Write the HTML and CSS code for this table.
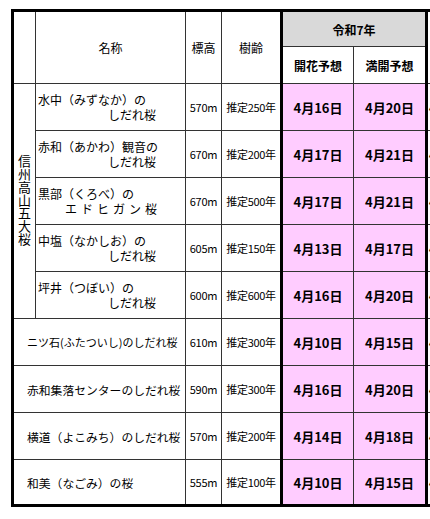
FILE: index.html
```html
<!DOCTYPE html>
<html lang="ja">
<head>
<meta charset="utf-8">
<title>しだれ桜 開花予想</title>
<link rel="stylesheet" href="styles.css">
</head>
<body>
<div class="viewport">
<table class="sakura">
<colgroup>
<col class="c-group"><col class="c-name"><col class="c-alt"><col class="c-age"><col class="c-bloom"><col class="c-full"><col class="c-next">
</colgroup>
<thead>
<tr class="h1">
<th rowspan="2" class="grp-head"></th>
<th rowspan="2" class="plain">名称</th>
<th rowspan="2" class="plain">標高</th>
<th rowspan="2" class="plain">樹齢</th>
<th colspan="2" class="year">令和7年</th>
<th rowspan="2" class="next"></th>
</tr>
<tr class="h2">
<th class="sub bloom">開花予想</th>
<th class="sub full">満開予想</th>
</tr>
</thead>
<tbody>
<tr class="row">
<td rowspan="5" class="group"><span class="vert">信州高山五大桜</span></td>
<td class="name"><span class="l1">水中（みずなか）の</span><span class="l2">しだれ桜</span></td>
<td class="alt">570m</td>
<td class="age">推定250年</td>
<td class="date bloom">4月16日</td>
<td class="date full">4月20日</td>
<td class="next">4月</td>
</tr>
<tr class="row">
<td class="name"><span class="l1">赤和（あかわ）観音の</span><span class="l2">しだれ桜</span></td>
<td class="alt">670m</td>
<td class="age">推定200年</td>
<td class="date bloom">4月17日</td>
<td class="date full">4月21日</td>
<td class="next">4月</td>
</tr>
<tr class="row">
<td class="name"><span class="l1">黒部（くろべ）の</span><span class="l2 spaced">エドヒガン桜</span></td>
<td class="alt">670m</td>
<td class="age">推定500年</td>
<td class="date bloom">4月17日</td>
<td class="date full">4月21日</td>
<td class="next">4月</td>
</tr>
<tr class="row">
<td class="name"><span class="l1">中塩（なかしお）の</span><span class="l2">しだれ桜</span></td>
<td class="alt">605m</td>
<td class="age">推定150年</td>
<td class="date bloom">4月13日</td>
<td class="date full">4月17日</td>
<td class="next">4月</td>
</tr>
<tr class="row">
<td class="name"><span class="l1">坪井（つぼい）の</span><span class="l2">しだれ桜</span></td>
<td class="alt">600m</td>
<td class="age">推定600年</td>
<td class="date bloom">4月16日</td>
<td class="date full">4月20日</td>
<td class="next">4月</td>
</tr>
<tr class="row">
<td colspan="2" class="wide shrink">ニツ石(ふたついし)のしだれ桜</td>
<td class="alt">610m</td>
<td class="age">推定300年</td>
<td class="date bloom">4月10日</td>
<td class="date full">4月15日</td>
<td class="next">4月</td>
</tr>
<tr class="row">
<td colspan="2" class="wide">赤和集落センターのしだれ桜</td>
<td class="alt">590m</td>
<td class="age">推定300年</td>
<td class="date bloom">4月16日</td>
<td class="date full">4月20日</td>
<td class="next">4月</td>
</tr>
<tr class="row">
<td colspan="2" class="wide">横道（よこみち）のしだれ桜</td>
<td class="alt">570m</td>
<td class="age">推定200年</td>
<td class="date bloom">4月14日</td>
<td class="date full">4月18日</td>
<td class="next">4月</td>
</tr>
<tr class="row last">
<td colspan="2" class="wide">和美（なごみ）の桜</td>
<td class="alt">555m</td>
<td class="age">推定100年</td>
<td class="date bloom">4月10日</td>
<td class="date full">4月15日</td>
<td class="next">4月</td>
</tr>
</tbody>
</table>
</div>
</body>
</html>
```

FILE: styles.css
```css
html, body {
  margin: 0;
  padding: 0;
  background: #fff;
}
body {
  font-family: "Noto Sans CJK JP", "Noto Sans", sans-serif;
  color: #000;
}
.viewport {
  width: 430px;
  height: 519px;
  overflow: hidden;
  box-sizing: border-box;
  padding: 9px 0 0 11px;
}
.sakura {
  border-collapse: collapse;
  table-layout: fixed;
  width: 477px;
  border: 3px solid #000;
}
.c-group { width: 23px; }
.c-name { width: 150px; }
.c-alt { width: 36px; }
.c-age { width: 60px; }
.c-bloom { width: 72px; }
.c-full { width: 73px; }
.c-next { width: 60px; }

.sakura th,
.sakura td {
  border: 1px solid #333;
  padding: 0;
  line-height: 15px;
  white-space: nowrap;
  overflow: hidden;
}
.h1 { height: 36px; }
.h2 { height: 37px; }
.row { height: 47px; }
.row.last { height: 46px; }

.plain {
  font-size: 12px;
  font-weight: normal;
  text-align: center;
  vertical-align: middle;
}
.year {
  background: #d9d9d9;
  font-size: 12px;
  font-weight: bold;
  text-align: center;
  border-left: 3px solid #000 !important;
  border-right: 3px solid #000 !important;
}
.sub {
  font-size: 12px;
  font-weight: bold;
  text-align: center;
}
.bloom { border-left: 3px solid #000 !important; }
.full { border-right: 3px solid #000 !important; }

.group {
  text-align: center;
  vertical-align: middle;
}
.vert {
  display: inline-block;
  writing-mode: vertical-rl;
  text-orientation: upright;
  font-size: 13px;
  line-height: 13px;
}
.name {
  font-size: 12px;
  text-align: left;
  vertical-align: middle;
  padding-left: 2px !important;
}
.l1, .l2 {
  display: block;
  height: 15px;
}
.l2 { padding-left: 70px; }
.l2.spaced {
  padding-left: 27px;
  letter-spacing: 4px;
}
.wide {
  font-size: 11.8px;
  text-align: left;
  vertical-align: middle;
  padding-left: 13px !important;
}
.wide.shrink {
  font-size: 11px;
}
.alt, .age {
  font-size: 11px;
  text-align: center;
  vertical-align: middle;
}
.alt { letter-spacing: -0.2px; }
.age { letter-spacing: -0.3px; }
.date {
  background: #ffccff;
  font-size: 13px;
  font-weight: bold;
  text-align: center;
  vertical-align: middle;
  border-color: #111;
}
.next {
  font-size: 13px;
  font-weight: bold;
  text-align: left;
  vertical-align: middle;
  padding-left: 1px !important;
}
```
